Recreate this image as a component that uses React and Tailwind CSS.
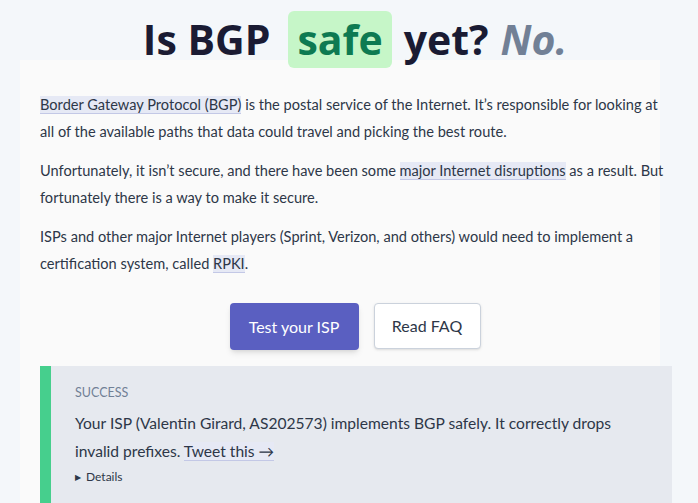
import React from 'react'

const headFont = { fontFamily: '"Open Sans", "Noto Sans", sans-serif' }
const bodyFont = { fontFamily: 'Lato, "Noto Sans", sans-serif' }

const Link = ({ children }) => (
    <a href="#" className="bg-[#e6e9f5] border-b border-[#c3c8e6] text-[#2d3748] no-underline">
        {children}
    </a>
)

const App = () => {
    return (
        <div className="min-h-[503px] w-full bg-[#f4f7fa] overflow-hidden" style={bodyFont}>
            {/* title */}
            <div className="h-[60px] flex justify-center items-start pt-[11px] pl-[12px]" style={headFont}>
                <h1 className="text-[41px] font-bold leading-[57px] text-[#1a1b33] flex items-center">
                    <span>Is BGP</span>
                    <span className="ml-[18px] mr-[12px] px-[9px] rounded-[6px] bg-[#c6f6c8] text-[#0e7a52]">safe</span>
                    <span>yet?</span>
                    <span className="ml-[12px] italic text-[#718096]">No.</span>
                </h1>
            </div>

            <div className="ml-[20px] mr-[38px] bg-[#fafafa] pt-[31px] pl-[20px] pb-0">
                <div className="w-[634px]">
                    <div className="text-[14.6px] leading-[27px] text-[#2d3748] space-y-[12px]">
                        <p>
                            <Link>Border Gateway Protocol (BGP)</Link> is the postal service of the Internet. It’s responsible for looking at all of the available paths that data could travel and picking the best route.
                        </p>
                        <p>
                            Unfortunately, it isn’t secure, and there have been some <Link>major Internet disruptions</Link> as a result. But fortunately there is a way to make it secure.
                        </p>
                        <p>
                            ISPs and other major Internet players (Sprint, Verizon, and others) would need to implement a certification system, called <Link>RPKI</Link>.
                        </p>
                    </div>

                    <div className="flex justify-center gap-[15px] mt-[26px] pb-[16px] pr-[4px]">
                        <button className="w-[129px] h-[47px] rounded-[4px] bg-[#5a5fc1] text-white text-[16px] shadow-md">
                            Test your ISP
                        </button>
                        <button className="w-[107px] h-[46px] rounded-[4px] bg-white border border-[#cbd2dc] text-[#2d3748] text-[16px] shadow-sm">
                            Read FAQ
                        </button>
                    </div>

                    {/* result */}
                    <div className="w-[632px] border-l-[11px] border-[#46cf8d] bg-[#e6e9ef] pl-[24px] pr-[20px] pt-[17px] pb-[18px]">
                        <div className="text-[12.5px] uppercase text-[#718096] leading-[20px]">Success</div>
                        <p className="mt-[6px] text-[15.6px] leading-[28px] text-[#2d3748]">
                            Your ISP (Valentin Girard, AS202573) implements BGP safely. It correctly drops invalid prefixes. <Link>Tweet this →</Link>
                        </p>
                        <div className="mt-[3px] text-[12px] text-[#2d3748] flex items-center gap-[5px]">
                            <span className="text-[8px]">▶</span>
                            <span>Details</span>
                        </div>
                    </div>
                </div>
            </div>
        </div>
    )
}

export default App
